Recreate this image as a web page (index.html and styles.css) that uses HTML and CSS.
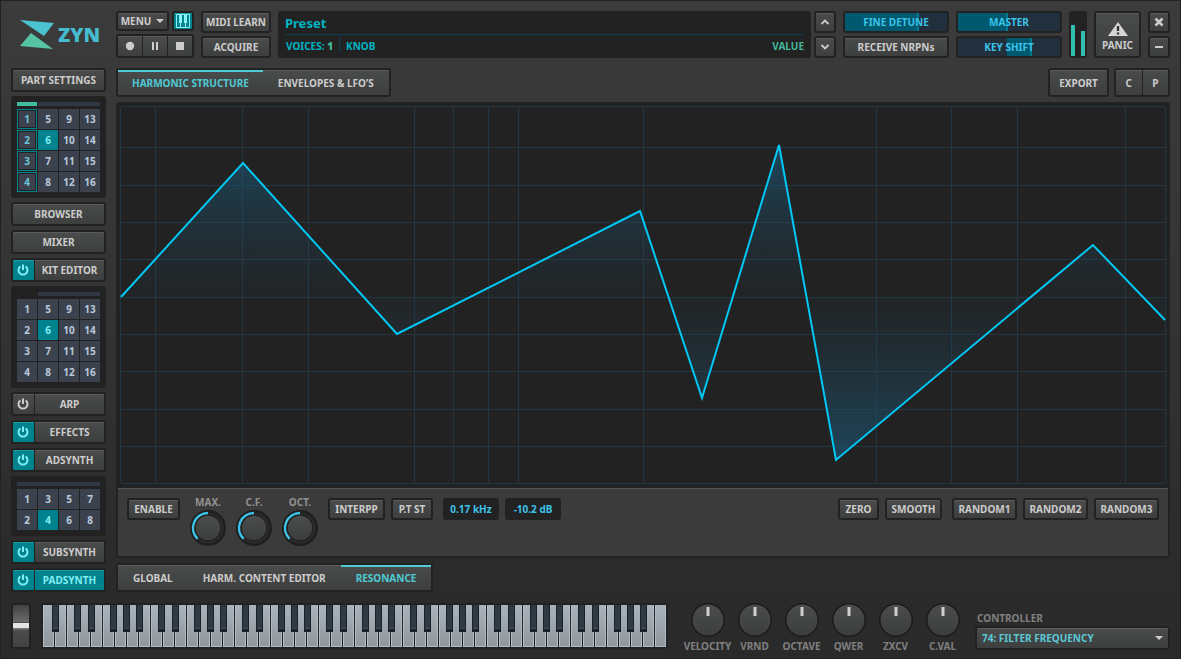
FILE: index.html
```html
<!DOCTYPE html>
<html lang="en">
<head>
<meta charset="utf-8">
<title>ZYN</title>
<link rel="stylesheet" href="styles.css">
</head>
<body>
<svg width="0" height="0" class="defs" aria-hidden="true">
  <symbol id="power" viewBox="0 0 12 12"><path d="M3.4 2.4A4.500 4.500 0 1 0 8.6 2.4M6 .4V6" fill="none" stroke="currentColor" stroke-width="2"/></symbol>
  <symbol id="arc" viewBox="0 0 36 36">
    <circle cx="18" cy="18" r="18" fill="#1f1f1f"/><circle cx="18" cy="18" r="15.5" fill="#2b2b2b"/>
    <circle cx="18" cy="18" r="13.2" fill="#1d1d1d"/><circle cx="18" cy="18" r="12.2" fill="url(#cap)"/>
    <path d="M18 3A15 15 0 0 0 7.6 28.8" fill="none" stroke="#3cc3ea" stroke-width="2.400"/>
  </symbol>
  <symbol id="dial" viewBox="0 0 34 34">
    <circle cx="17" cy="17" r="17" fill="#1b1b1b"/><circle cx="17" cy="17" r="15.5" fill="url(#cap)"/>
    <rect x="15.5" y="4" width="3" height="9" fill="#d0d0d0"/>
  </symbol>
  <defs><linearGradient id="cap" x2="0" y2="1"><stop stop-color="#4b4c4c"/><stop offset="1" stop-color="#3c3d3d"/></linearGradient></defs>
</svg>
<div class="app">
  <header class="top">
    <div class="logo">
      <svg width="34" height="30" viewBox="0 0 34 30" aria-hidden="true">
        <defs><linearGradient id="lg" x2="1"><stop stop-color="#56c4a4"/><stop offset="1" stop-color="#56c4a4"/></linearGradient></defs>
        <path d="M0 0L34 3L24 16Z" fill="#4bc3cf"/><path d="M11 13L33 29L0 26Z" fill="url(#lg)"/>
      </svg>
      <span>ZYN</span>
    </div>
    <div class="stack left-tools">
      <div class="line">
        <button class="btn menu">MENU <svg width="8" height="4" viewBox="0 0 8 4"><path d="M0 0H8L4 4Z" fill="currentColor"/></svg></button>
        <button class="btn on keys" aria-label="Keyboard"><svg width="14" height="14" viewBox="0 0 14 14"><path d="M.5.5H13.5V13.5H.5Z" fill="none" stroke="#8af0fa"/><path d="M3 1H6V9H5V13H4V9H3ZM8 1H11V9H10V13H9V9H8Z" fill="#8af0fa"/></svg></button>
      </div>
      <div class="group transport">
        <button aria-label="Record"><svg width="10" height="10"><circle cx="5" cy="5" r="4.2" fill="currentColor"/></svg></button>
        <button aria-label="Pause"><svg width="10" height="10"><path d="M2 1H4V9H2ZM6 1H8V9H6Z" fill="currentColor"/></svg></button>
        <button aria-label="Stop"><svg width="10" height="10"><path d="M1 1H9V9H1Z" fill="currentColor"/></svg></button>
      </div>
    </div>
    <div class="stack midi"><button class="btn">MIDI LEARN</button><button class="btn">ACQUIRE</button></div>
    <div class="lcd">
      <div class="lcd-title">Preset</div>
      <div class="lcd-row"><span class="voices">VOICES: <b>1</b></span><span class="knobname">KNOB</span><span class="value">VALUE</span></div>
    </div>
    <div class="stack arrows">
      <button class="btn" aria-label="Previous"><svg width="10" height="6"><path d="M1.5 5L5 1.5L8.5 5" fill="none" stroke="currentColor" stroke-width="1.8"/></svg></button>
      <button class="btn" aria-label="Next"><svg width="10" height="6"><path d="M1.5 1L5 4.500L8.5 1" fill="none" stroke="currentColor" stroke-width="1.8"/></svg></button>
    </div>
    <div class="stack faders">
      <label class="fader detune"><input type="range" value="72"><span>FINE DETUNE</span></label>
      <button class="btn">RECEIVE NRPNs</button>
    </div>
    <div class="stack faders">
      <label class="fader master"><input type="range" value="48"><span>MASTER</span></label>
      <label class="fader shift"><input type="range" value="72"><span>KEY SHIFT</span></label>
    </div>
    <div class="meter"><i style="height:31px"></i><i style="height:25px"></i></div>
    <button class="btn panic"><svg width="20" height="14" viewBox="0 0 20 14"><path d="M10 0L20 14H0Z" fill="#d6d6d6"/><path d="M8.800 4H11.200V9H8.800ZM8.800 10.500H11.200V12.500H8.800Z" fill="#333"/></svg>PANIC</button>
    <div class="stack arrows">
      <button class="btn" aria-label="Close"><svg width="10" height="10"><path d="M1.500 1.500L8.500 8.500M8.500 1.500L1.500 8.500" stroke="currentColor" stroke-width="2.600"/></svg></button>
      <button class="btn" aria-label="Minimise"><svg width="10" height="10"><path d="M1 5H9" stroke="currentColor" stroke-width="2"/></svg></button>
    </div>
  </header>

  <div class="body">
    <aside class="side">
      <button class="btn">PART SETTINGS</button>
      <div class="pad">
        <div class="bars"><i class="lit"></i><i class="rest"></i></div>
        <div class="cells">
          <button class="ring">1</button><button class="ring">2</button><button class="ring">3</button><button class="ring">4</button>
          <button>5</button><button class="sel">6</button><button>7</button><button>8</button>
          <button>9</button><button>10</button><button>11</button><button>12</button>
          <button>13</button><button>14</button><button>15</button><button>16</button>
        </div>
      </div>
      <button class="btn">BROWSER</button>
      <button class="btn">MIXER</button>
      <div class="group split"><button class="on" aria-label="Kit power"><svg width="12" height="12"><use href="#power"/></svg></button><button>KIT EDITOR</button></div>
      <div class="pad">
        <div class="bars"><i></i><i class="rest"></i></div>
        <div class="cells">
          <button>1</button><button>2</button><button>3</button><button>4</button>
          <button>5</button><button class="sel">6</button><button>7</button><button>8</button>
          <button>9</button><button>10</button><button>11</button><button>12</button>
          <button>13</button><button>14</button><button>15</button><button>16</button>
        </div>
      </div>
      <div class="group split"><button aria-label="Arp power"><svg width="12" height="12"><use href="#power"/></svg></button><button>ARP</button></div>
      <div class="group split"><button class="on" aria-label="Effects power"><svg width="12" height="12"><use href="#power"/></svg></button><button>EFFECTS</button></div>
      <div class="group split"><button class="on" aria-label="Adsynth power"><svg width="12" height="12"><use href="#power"/></svg></button><button>ADSYNTH</button></div>
      <div class="pad">
        <div class="bars"><i class="full"></i></div>
        <div class="cells two">
          <button>1</button><button>2</button><button>3</button><button class="sel">4</button>
          <button>5</button><button>6</button><button>7</button><button>8</button>
        </div>
      </div>
      <div class="group split"><button class="on" aria-label="Subsynth power"><svg width="12" height="12"><use href="#power"/></svg></button><button>SUBSYNTH</button></div>
      <div class="group split"><button class="on" aria-label="Padsynth power"><svg width="12" height="12"><use href="#power"/></svg></button><button class="on">PADSYNTH</button></div>
    </aside>

    <main class="main">
      <div class="bar">
        <nav class="group tabs high"><button class="active">HARMONIC STRUCTURE</button><button>ENVELOPES &amp; LFO’S</button></nav>
        <div class="bar-right">
          <button class="btn export">EXPORT</button>
          <div class="group cp"><button>C</button><button>P</button></div>
        </div>
      </div>
      <section class="editor">
        <svg class="graph" viewBox="0 0 1046 378" preserveAspectRatio="none" role="img" aria-label="Resonance curve">
          <defs><linearGradient id="fill" gradientUnits="userSpaceOnUse" x1="0" y1="38" x2="0" y2="355">
            <stop stop-color="#1b5c80" stop-opacity=".62"/><stop offset=".48" stop-color="#1d4256" stop-opacity=".08"/><stop offset="1" stop-color="#1b5c80" stop-opacity=".62"/></linearGradient></defs>
          <path class="grid" d="M35.500 0V378M122.500 0V378M188.500 0V378M294.500 0V378M333.500 0V378M368.500 0V378M398.500 0V378M523.500 0V378M756.500 0V378M831.500 0V378M897.500 0V378M1005.500 0V378M0 41.500H1046M0 79.500H1046M0 116.500H1046M0 153.500H1046M0 191.500H1046M0 228.500H1046M0 265.500H1046M0 303.500H1046M0 340.500H1046"/>
          <rect class="grid" x=".5" y=".5" width="1045" height="377" rx="2"/>
          <path d="M1 191L123 57L277 228L520 105L582 292L659 39L716 354L973 139L1045 214V191Z" fill="url(#fill)"/>
          <path class="curve" d="M1 191L123 57L277 228L520 105L582 292L659 39L716 354L973 139L1045 214"/>
        </svg>
        <div class="controls">
          <div class="set"><button class="btn">ENABLE</button></div>
          <label class="knob">MAX.<svg width="36" height="36"><use href="#arc"/></svg><input type="range"></label>
          <label class="knob">C.F.<svg width="36" height="36"><use href="#arc"/></svg><input type="range"></label>
          <label class="knob">OCT.<svg width="36" height="36"><use href="#arc"/></svg><input type="range"></label>
          <div class="set"><button class="btn w57">INTERPP</button><button class="btn w42">P.T ST</button></div>
          <div class="set"><output>0.17 kHz</output><output>-10.2 dB</output></div>
          <div class="set push"><button class="btn w41">ZERO</button><button class="btn w57">SMOOTH</button></div>
          <div class="set"><button class="btn w65">RANDOM1</button><button class="btn w65">RANDOM2</button><button class="btn w65">RANDOM3</button></div>
        </div>
      </section>
      <div class="bar">
        <nav class="group tabs low"><button>GLOBAL</button><button>HARM. CONTENT EDITOR</button><button class="active">RESONANCE</button></nav>
      </div>
    </main>
  </div>

  <footer class="foot">
    <label class="wheel"><input type="range" aria-label="Pitch wheel"></label>
    <div class="piano">
      <svg width="623" height="42" role="img" aria-label="Piano keys">
        <defs>
          <linearGradient id="ivory" x2="0" y2="1"><stop stop-color="#aab3bc"/><stop offset="1" stop-color="#90979d"/></linearGradient>
          <pattern id="white" width="12" height="42" patternUnits="userSpaceOnUse"><rect width="12" height="42" fill="#222"/><rect width="11" height="42" fill="#b2bec5"/><rect x="1" width="9" height="41" fill="url(#ivory)"/></pattern>
          <pattern id="black" x="24" width="84" height="42" patternUnits="userSpaceOnUse">
            <path d="M7 0h7v27h-7zM21 0h7v27h-7zM43 0h7v27h-7zM56 0h7v27h-7zM69 0h7v27h-7z" fill="#1a2025"/>
            <path d="M8 0h5v24h-5zM22 0h5v24h-5zM44 0h5v24h-5zM57 0h5v24h-5zM70 0h5v24h-5z" fill="#2e3b44"/>
            <path d="M8 23h5v1h-5zM22 23h5v1h-5zM44 23h5v1h-5zM57 23h5v1h-5zM70 23h5v1h-5z" fill="#44545e"/>
          </pattern>
        </defs>
        <rect width="623" height="42" fill="url(#white)"/><rect x="5" width="605" height="27" fill="url(#black)"/>
      </svg>
    </div>
    <div class="dials">
      <label class="dial"><svg width="34" height="34"><use href="#dial"/></svg>VELOCITY<input type="range"></label>
      <label class="dial"><svg width="34" height="34"><use href="#dial"/></svg>VRND<input type="range"></label>
      <label class="dial"><svg width="34" height="34"><use href="#dial"/></svg>OCTAVE<input type="range"></label>
      <label class="dial"><svg width="34" height="34"><use href="#dial"/></svg>QWER<input type="range"></label>
      <label class="dial"><svg width="34" height="34"><use href="#dial"/></svg>ZXCV<input type="range"></label>
      <label class="dial"><svg width="34" height="34"><use href="#dial"/></svg>C.VAL<input type="range"></label>
    </div>
    <div class="controller">
      <label for="ctl">CONTROLLER</label>
      <div class="pick"><select id="ctl"><option>74: FILTER FREQUENCY</option></select><svg width="8" height="4"><path d="M0 0H8L4 4Z" fill="#ccc"/></svg></div>
    </div>
  </footer>
</div>
</body>
</html>
```
FILE: styles.css
```css
* { box-sizing: border-box; }
html, body { height: 100%; }
body { margin: 0; background: #2a2a2a; font: 700 10px/12px "Noto Sans", "Open Sans", sans-serif; color: #ccc; }
.defs { position: absolute; }
svg { display: block; }
button, select, input { font: inherit; color: inherit; margin: 0; }

.app { min-height: 100%; display: flex; flex-direction: column; padding: 10px; border: 1px solid #222; background: linear-gradient(#3b3b3b, #343434 45%, #2b2b2b 85%, #2a2a2a); }

/* raised controls */
.btn, .group > button { display: flex; align-items: center; justify-content: center; padding: 0; white-space: nowrap; background: linear-gradient(#4a4b4b, #3d3e3e); box-shadow: inset 0 1px #5a5b5b; }
.btn { border: 2px solid #222; border-radius: 3px; }
.group { display: flex; gap: 1px; padding: 2px; background: #222; border-radius: 3px; }
.group > button { border: 0; flex: 1; border-radius: 1px; }
.btn.on, .group > button.on { background: #00838c; color: #80eef4; box-shadow: inset 0 1px #1a9d9f; }

/* header */
.top { display: flex; gap: 7px; height: 47px; }
.stack { display: flex; flex-direction: column; gap: 3px; }
.stack > * { flex: 1; }
.logo { width: 98px; display: flex; align-items: center; gap: 4px; padding: 0 0 0 9px; color: #45bcd0; font: 900 20px/24px "Noto Sans", sans-serif; }
.left-tools { width: 78px; }
.line { display: flex; gap: 3px; }
.menu { flex: 1; gap: 5px; }
.keys { width: 22px; }
.midi { width: 70px; }
.arrows { width: 22px; }
.faders { width: 106px; }
.lcd { flex: 1; padding: 3px 7px; background: #222; border-radius: 3px; color: #00b4c4; }
.lcd-title { height: 21px; font-size: 13px; line-height: 19px; border-bottom: 1px solid #0f3c54; }
.lcd-row { display: flex; line-height: 18px; height: 18px; }
.voices { padding: 2px 6px 0 1px; border-right: 1px solid #0f3c54; }
.voices b, .value { color: #43b89a; }
.knobname { padding: 2px 6px 0; }
.value { margin-left: auto; padding-top: 2px; }
.lcd + .arrows { margin-left: -4px; }

.fader { position: relative; display: flex; border: 2px solid #222; border-radius: 3px; background: #222f3d; color: #3cc3ea; }
.fader input { position: absolute; inset: 0; width: 100%; height: 100%; opacity: 0; }
.fader span { margin: auto; }
.detune { background: linear-gradient(90deg, #00596e 71%, #007a8c 71% 73%, #222f3d 73%); }
.master { background: linear-gradient(90deg, #00596e 47%, #007a8c 47% 49%, #222f3d 49%); }
.shift { background: linear-gradient(90deg, #222f3d 48%, #00596e 48% 71%, #007a8c 71% 73%, #222f3d 73%); }
.meter { width: 18px; display: flex; align-items: flex-end; justify-content: space-between; padding: 2px; background: #222; border-radius: 3px; }
.meter i { width: 4px; background: #33bfb0; }
.panic { width: 47px; flex-direction: column; gap: 3px; padding-top: 3px; }

/* body */
.body { flex: 1; display: flex; gap: 10px; margin-top: 10px; }
.side { width: 95px; display: flex; flex-direction: column; gap: 4px; }
.side > .btn, .split { height: 24px; }
.split > button:first-child { flex: none; width: 21px; padding-right: 1px; }
.pad { padding: 6px; background: #222; border-radius: 3px; }
.bars { display: flex; gap: 1px; height: 4px; margin-bottom: 3px; }
.bars i { width: 20px; }
.bars .lit { background: #43bd9c; }
.bars .rest, .bars .full { flex: 1; background: #313843; }
.cells { display: grid; grid-auto-flow: column; grid-template-rows: repeat(4, 20px); grid-auto-columns: 1fr; gap: 1px; }
.cells.two { grid-template-rows: repeat(2, 20px); }
.cells button { padding: 0; border: 0; background: #3b424e; color: #b9c9dc; }
.cells .sel { background: #00838c; color: #80eef4; }
.cells .ring { border: 1px solid #00838c; box-shadow: inset 0 0 0 1px #222; color: #6cc5d6; }

.main { flex: 1; min-width: 0; display: flex; flex-direction: column; gap: 5px; }
.bar { display: flex; justify-content: space-between; height: 29px; }
.bar-right { display: flex; gap: 5px; }
.tabs { gap: 0; }
.tabs > button { flex: none; padding: 0 15px; border-radius: 0; }
.tabs > button.active { color: #4fcbd4; box-shadow: inset 0 2px #4fcbd4; }
.high > button { padding: 0 14px; }
.high > button:last-child { padding: 0 15px; }
.export { width: 61px; }
.cp { width: 56px; }
.editor { flex: 1; display: flex; flex-direction: column; padding: 4px 2px 2px; gap: 4px; background: #222; border-radius: 3px; }
.graph { flex: 1; min-height: 0; width: auto; margin: 0 2px; }
.grid { fill: none; stroke: #223643; vector-effect: non-scaling-stroke; }
.curve { fill: none; stroke: #00c8f5; stroke-width: 2; vector-effect: non-scaling-stroke; }
.controls { display: flex; align-items: flex-start; gap: 10px; height: 68px; padding: 7px 9px; background: #3b3b3c; border-top: 1px solid #545454; }
.set { display: flex; gap: 6px; padding-top: 2px; }
.set > * { height: 22px; width: 53px; }
.set .w41 { width: 41px; }
.set .w42 { width: 42px; }
.set .w57 { width: 57px; }
.set .w65 { width: 65px; }
.set output { width: 56px; display: flex; align-items: center; justify-content: center; background: #222; border-radius: 3px; color: #3cc3ea; }
.push { margin-left: auto; }
.knob, .dial { position: relative; display: flex; flex-direction: column; align-items: center; white-space: nowrap; }
.knob { width: 36px; gap: 2px; color: #919191; }
.knob input, .dial input, .wheel input { position: absolute; inset: 0; width: 100%; height: 100%; opacity: 0; }

/* footer */
.foot { display: flex; align-items: flex-start; gap: 9px; margin-top: 11px; height: 45px; }
.wheel { position: relative; width: 20px; height: 46px; margin-right: 1px; border: 2px solid #222; border-radius: 3px; background: linear-gradient(#424242, #6a6a6a 40%, #333 43%, #e4e4e4 43% 54%, #777 54% 57%, #4c4c4c 60%, #424242); }
.piano { padding: 2px; background: #222; border-radius: 3px; }
.dials { display: flex; margin-left: auto; }
.dial { width: 47px; gap: 3px; color: #808080; }
.controller { width: 195px; padding-top: 9px; color: #808080; }
.controller label { display: block; padding: 0 2px 2px; }
.pick { position: relative; }
.pick select { display: block; width: 100%; height: 24px; padding: 0 5px; appearance: none; border: 2px solid #222; border-radius: 3px; background: linear-gradient(#4a4b4b, #3d3e3e); box-shadow: inset 0 1px #5a5b5b; color: #5cc8d4; }
.pick svg { position: absolute; right: 7px; top: 10px; pointer-events: none; }
```
